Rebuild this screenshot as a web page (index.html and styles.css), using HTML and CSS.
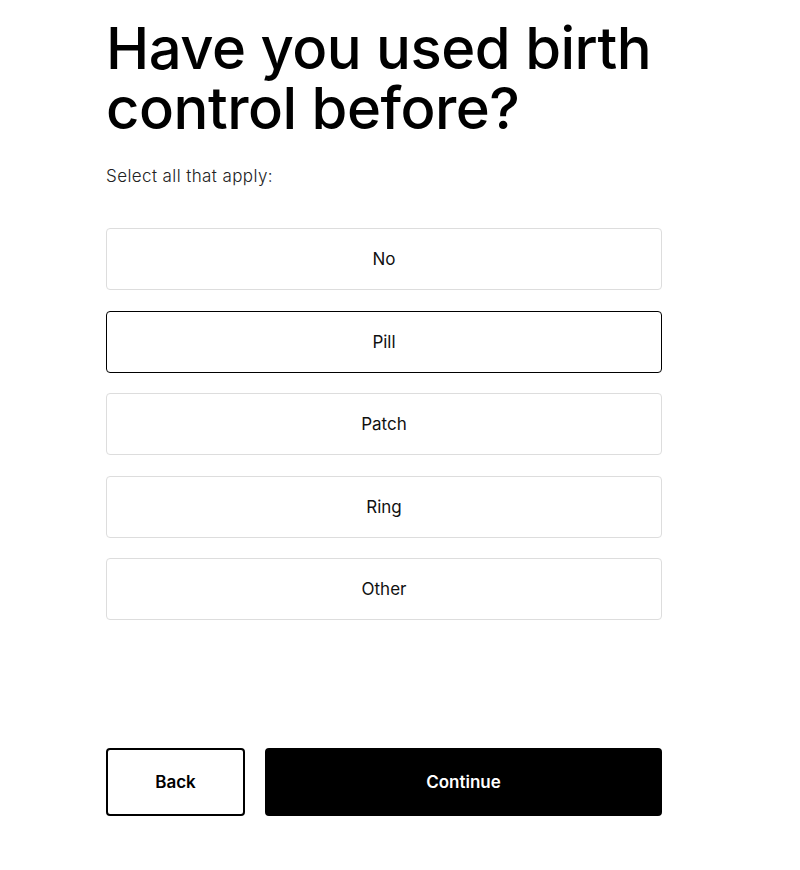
FILE: index.html
```html
<!DOCTYPE html>
<html lang="en">
<head>
    <meta charset="UTF-8">
    <meta name="viewport" content="width=device-width, initial-scale=1.0">
    <title>Birth Control History</title>
    <link rel="stylesheet" href="styles.css">
</head>
<body>

    <div class="container">
        <h1>Have you used birth control before?</h1>
        <p class="hint">Select all that apply:</p>

        <div class="options">
            <button class="option">No</button>
            <button class="option selected">Pill</button>
            <button class="option">Patch</button>
            <button class="option">Ring</button>
            <button class="option">Other</button>
        </div>

        <div class="buttons">
            <button class="btn btn-back">Back</button>
            <button class="btn btn-next">Continue</button>
        </div>
    </div>

</body>
</html>
```

FILE: styles.css
```css
body {
    font-family: Inter, "Noto Sans", sans-serif;
    background-color: #fff;
    color: #000;
    margin: 0;
    padding: 0;
}
.container {
    width: 556px;
    margin-left: 106px;
    padding-top: 18px;
}
h1 {
    font-size: 58px;
    font-weight: 500;
    line-height: 60px;
    letter-spacing: -0.5px;
    margin: 0;
}
.hint {
    font-size: 17px;
    font-weight: 300;
    line-height: 20px;
    letter-spacing: 0.4px;
    color: #222;
    margin: 28px 0 0;
}
.options {
    display: flex;
    flex-direction: column;
    gap: 20.5px;
    margin-top: 42px;
}
.option {
    height: 62px;
    background: #fff;
    border: 1px solid #ddd;
    border-radius: 4px;
    font-family: inherit;
    font-size: 17px;
    color: #111;
    cursor: pointer;
}
.option.selected {
    border-color: #000;
}
.buttons {
    display: flex;
    gap: 20px;
    margin-top: 128px;
}
.btn {
    height: 68px;
    border-radius: 4px;
    font-family: inherit;
    font-size: 17px;
    font-weight: 600;
    cursor: pointer;
}
.btn-back {
    width: 139px;
    border: 2px solid #000;
    background: #fff;
    color: #000;
}
.btn-next {
    flex: 1;
    border: 2px solid #000;
    background: #000;
    color: #fff;
}
```
